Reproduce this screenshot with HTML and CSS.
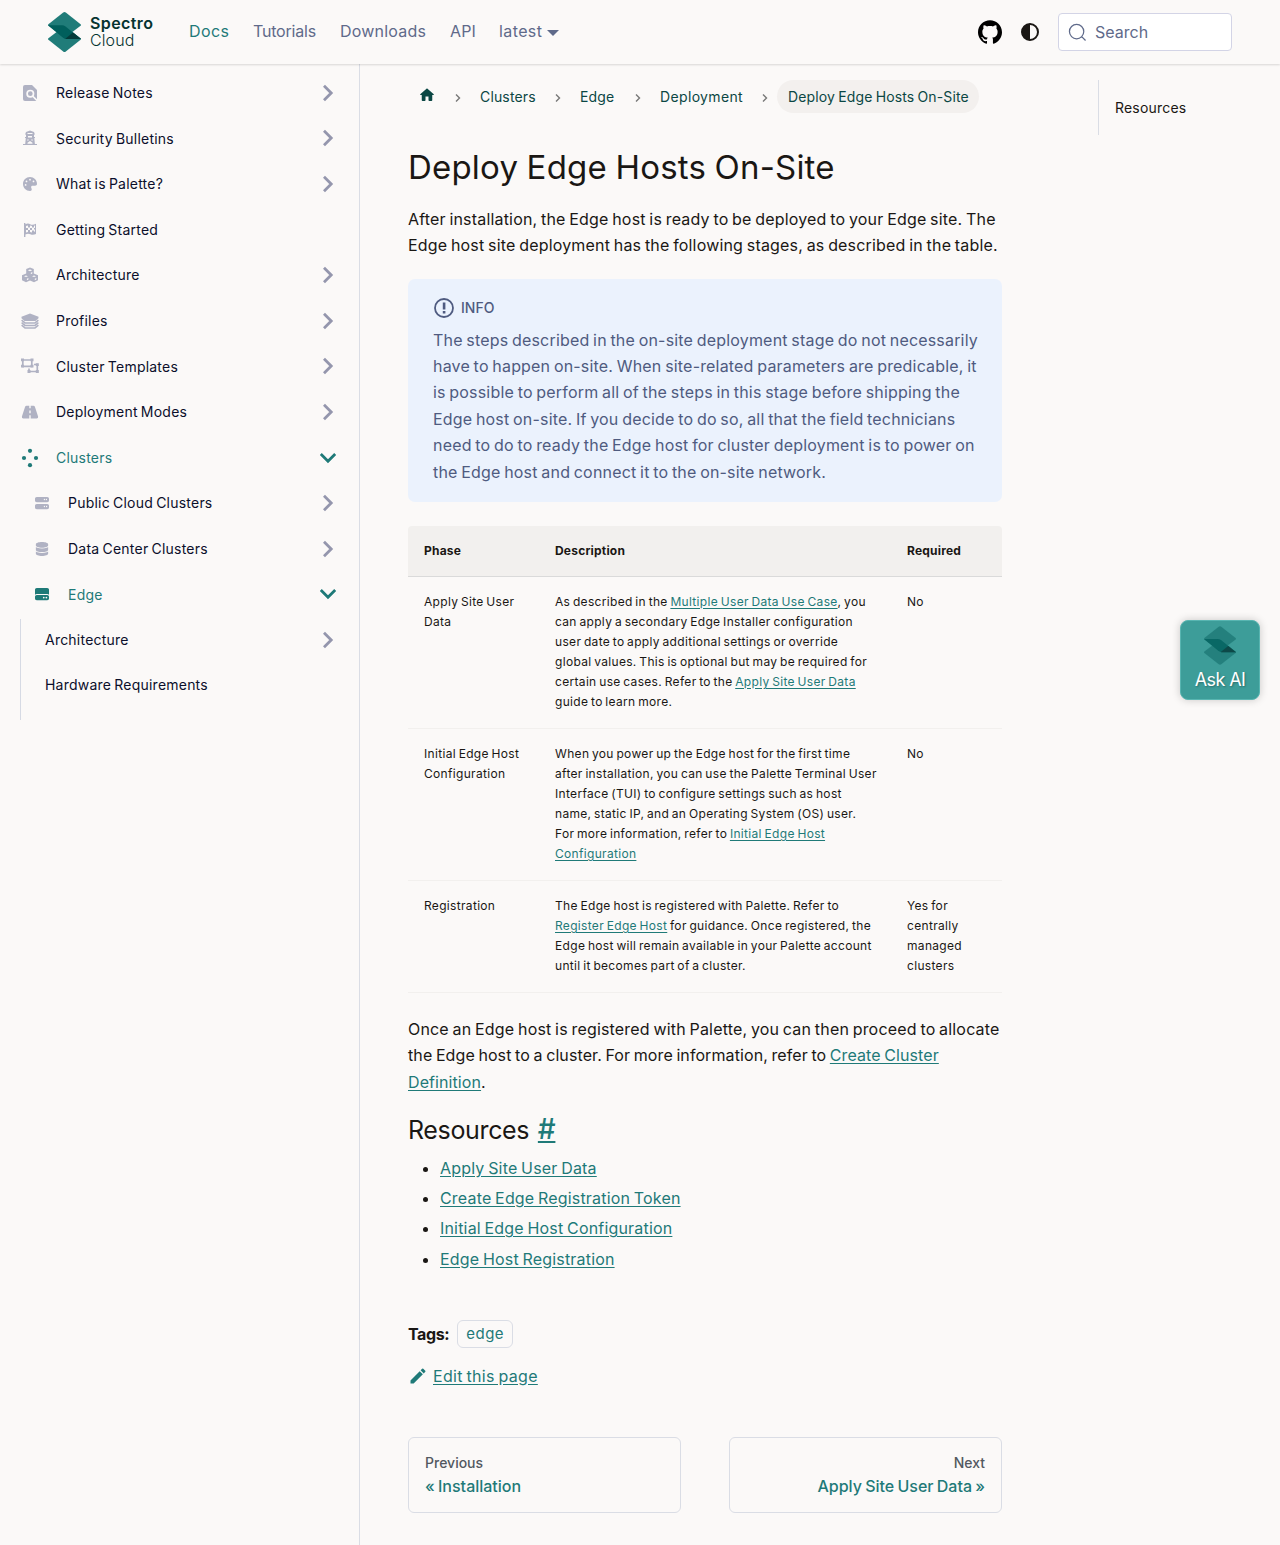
FILE: index.html
```html
<!DOCTYPE html>
<html lang="en">
<head>
<meta charset="utf-8">
<title>Deploy Edge Hosts On-Site</title>
<link rel="stylesheet" href="styles.css">
</head>
<body>
<svg class="sprite" aria-hidden="true">
  <symbol id="logo" viewBox="0 0 33 40">
    <path fill="#207c79" d="M15.2.6q1.3-1 2.6 0L32.6 12.2q.8.8 0 1.6L16.5 26 .4 13.8q-.8-.8 0-1.6z"/>
    <path fill="#207c79" d="M16.5 14l16.1 12.2q.8.8 0 1.6L17.8 39.4q-1.3 1-2.6 0L.4 27.8q-.8-.8 0-1.6z"/>
    <path fill="#005f5c" d="M0 13.2h14q2 0 3.5 1.2L33 27H18.500q-2 0-3.500-1.200z"/>
    <path fill="#053b3a" d="M25 20.500L33 27H18.500q-.8 0-1.200-.2z"/>
  </symbol>
  <symbol id="chev" viewBox="0 0 24 24"><path fill="none" stroke="currentColor" stroke-width="2.800" d="M8 4.800l7.200 7.200L8 19.200"/></symbol>
  <symbol id="sep" viewBox="0 0 14 14"><path fill="none" stroke="currentColor" stroke-width="1.400" d="M5 3.500L8.500 7 5 10.500"/></symbol>
</svg>
<header class="navbar">
  <a class="brand"><svg class="brand-mark"><use href="#logo"/></svg><span class="brand-name"><b>Spectro</b><span>Cloud</span></span></a>
  <nav class="nav-links">
    <a class="active docs">Docs</a><a class="tutorials">Tutorials</a><a class="downloads">Downloads</a><a class="api">API</a><a class="latest">latest<i class="caret"></i></a>
  </nav>
  <div class="nav-right">
    <svg class="github" viewBox="0 0 24 24"><path d="M12 .297c-6.63 0-12 5.373-12 12 0 5.303 3.438 9.8 8.205 11.385.6.113.82-.258.82-.577 0-.285-.01-1.04-.015-2.04-3.338.724-4.042-1.61-4.042-1.61C4.422 18.07 3.633 17.7 3.633 17.7c-1.087-.744.084-.729.084-.729 1.205.084 1.838 1.236 1.838 1.236 1.07 1.835 2.809 1.305 3.495.998.108-.776.417-1.305.76-1.605-2.665-.3-5.466-1.332-5.466-5.93 0-1.31.465-2.38 1.235-3.22-.135-.303-.54-1.523.105-3.176 0 0 1.005-.322 3.3 1.23.96-.267 1.98-.399 3-.405 1.02.006 2.04.138 3 .405 2.28-1.552 3.285-1.23 3.285-1.23.645 1.653.24 2.873.12 3.176.765.84 1.23 1.91 1.23 3.22 0 4.61-2.805 5.625-5.475 5.92.42.36.81 1.096.81 2.22 0 1.606-.015 2.896-.015 3.286 0 .315.21.69.825.57C20.565 22.092 24 17.592 24 12.297c0-6.627-5.373-12-12-12"/></svg>
    <svg class="theme" viewBox="0 0 18 18"><circle cx="9" cy="9" r="8" fill="none" stroke="#1a1714" stroke-width="2"/><path fill="#1a1714" d="M9 1a8 8 0 0 0 0 16z"/></svg>
    <div class="search"><svg viewBox="0 0 20 20"><path fill="none" stroke="currentColor" stroke-width="1.300" stroke-linecap="round" d="M14.386 14.386l4.088 4.088-4.088-4.088c-2.942 2.942-7.711 2.942-10.653 0-2.942-2.942-2.942-7.711 0-10.653 2.942-2.942 7.711-2.942 10.653 0 2.942 2.942 2.942 7.711 0 10.653z"/></svg><span>Search</span></div>
  </div>
</header>
<div class="layout">
  <aside class="sidebar">
    <ul class="menu">
      <li><svg class="ico" viewBox="0 0 20 20"><path fill-rule="evenodd" d="M5 2h7l5 5v11H5a2 2 0 0 1-2-2V4a2 2 0 0 1 2-2z"/><circle class="cut" cx="10.300" cy="10.700" r="3.200"/><path class="cut" d="M12.600 13l4.800 4.800"/></svg><span>Release Notes</span><svg class="chev"><use href="#chev"/></svg></li>
      <li><svg class="ico" viewBox="0 0 20 20"><path fill-rule="evenodd" d="M10 2.500l4 1.500.8 2.200-.8.8v2h1v1h-.7l.6 6H17v1H3v-1h2.200l.6-6H5V9h1V7l-.8-.8L6 4zM7.500 5v1h5V5zM8 8v1.500h4V8zM7.700 11l-.3 2L9 12zm4.600 0L11 12l1.600 1zM10 13l-2.500 1.700v1h5v-1z"/></svg><span>Security Bulletins</span><svg class="chev"><use href="#chev"/></svg></li>
      <li><svg class="ico fa" viewBox="0 0 512 512"><path d="M512 256c0 .9 0 1.800 0 2.700c-.4 36.500-33.600 61.300-70.100 61.300H344c-26.500 0-48 21.500-48 48c0 3.400 .4 6.700 1 9.900c2.100 10.200 6.500 20 10.800 29.900c6.100 13.800 12.100 27.500 12.100 42c0 31.800-21.600 60.700-53.400 62c-3.500 .1-7 .2-10.600 .2C114.600 512 0 397.400 0 256S114.600 0 256 0S512 114.600 512 256zM128 288a32 32 0 1 0 -64 0 32 32 0 1 0 64 0zm0-96a32 32 0 1 0 0-64 32 32 0 1 0 0 64zM288 96a32 32 0 1 0 -64 0 32 32 0 1 0 64 0zm96 96a32 32 0 1 0 0-64 32 32 0 1 0 0 64z"/></svg><span>What is Palette?</span><svg class="chev"><use href="#chev"/></svg></li>
      <li><svg class="ico" viewBox="0 0 20 20"><path fill-rule="evenodd" d="M4 3h1.400v1.200q2.600-1.200 4.800 0t5.800-.4V14q-3 1.400-5.600.2t-5 .3V17H4zm2 3v2h2v2H6v2.400l2-.4v-2h2v2l2 .5v-2h2v1.300l1-.3v-2h-1V8h1V5.500l-1 .3v1.700h-2V6l-2-.5v2H8v-2zm4 2h2v2h-2z"/></svg><span>Getting Started</span></li>
      <li><svg class="ico" viewBox="0 0 20 20"><path fill-rule="evenodd" d="M10 2.400l3.800 1.600v4.500l4.200 1.800v5L14 17.200l-4-1.700-4 1.700-4-1.900v-5l4.200-1.800V4zM7.800 5.300L10 6.200l2.200-.9L10 4.500zM4 11.200l2 .9 2-.9-2-.8zm8 0l2 .9 2-.9-2-.8zM10.800 7.700v1.600l1.500-.7V7zM6.900 13.700v1.600l1.500-.7V13zm7.900 0v1.600l1.500-.7V13z"/></svg><span>Architecture</span><svg class="chev"><use href="#chev"/></svg></li>
      <li><svg class="ico" viewBox="0 0 20 20"><path d="M10 2.500l8.500 3.300v1.400L15.500 10h-11l-3-2.800V5.800z"/><path fill="none" stroke="currentColor" stroke-width="1.500" d="M1.600 9.200L5 11.900h10l3.400-2.700M1.600 11.700L5 14.400h10l3.400-2.700M1.600 14.200L5 16.900h10l3.400-2.700"/></svg><span>Profiles</span><svg class="chev"><use href="#chev"/></svg></li>
      <li><svg class="ico" viewBox="0 0 20 20"><path fill="none" stroke="currentColor" stroke-width="1.700" d="M2.800 4h9v6.300h-9zM14 8.500h3.300v7H9V12.500"/><path d="M1 2.500h3v2.800H1zm9.500 0h3v2.800h-3zM1 8.800h3v2.800H1zm9.500 0h3v2.800h-3zm5.300-1.600h3V10h-3zm0 6.900h3v2.800h-3zM7.500 14.100h3v2.800h-3z"/></svg><span>Cluster Templates</span><svg class="chev"><use href="#chev"/></svg></li>
      <li><svg class="ico" viewBox="0 0 20 20"><path d="M6.500 3.800h2.800v2.500h1.400V3.800h2.800q1 0 1.400 1l3.200 9.700q.3 1.900-1.400 1.900h-6v-3.200H9.300v3.200h-6q-1.700 0-1.400-1.900L5.100 4.800q.4-1 1.400-1zm2.800 4.700v2.700h1.400V8.500z" fill-rule="evenodd"/></svg><span>Deployment Modes</span><svg class="chev"><use href="#chev"/></svg></li>
      <li class="open"><svg class="ico" viewBox="0 0 20 20"><circle cx="10" cy="2.800" r="2.100"/><circle cx="4" cy="10" r="2.100"/><circle cx="16" cy="10" r="2.100"/><circle cx="10" cy="17.200" r="2.100"/></svg><span>Clusters</span><svg class="chev"><use href="#chev"/></svg></li>
      <li class="sub"><svg class="ico fa" viewBox="0 0 512 512"><path d="M64 32C28.700 32 0 60.700 0 96v64c0 35.300 28.700 64 64 64H448c35.300 0 64-28.700 64-64V96c0-35.300-28.700-64-64-64H64zm280 72a24 24 0 1 1 0 48 24 24 0 1 1 0-48zm48 24a24 24 0 1 1 48 0 24 24 0 1 1 -48 0zM64 288c-35.300 0-64 28.700-64 64v64c0 35.300 28.700 64 64 64H448c35.300 0 64-28.700 64-64V352c0-35.300-28.700-64-64-64H64zm280 72a24 24 0 1 1 0 48 24 24 0 1 1 0-48zm56 24a24 24 0 1 1 48 0 24 24 0 1 1 -48 0z"/></svg><span>Public Cloud Clusters</span><svg class="chev"><use href="#chev"/></svg></li>
      <li class="sub"><svg class="ico fa" viewBox="-32 0 512 512"><path d="M448 80v48c0 44.200-100.300 80-224 80S0 172.200 0 128V80C0 35.800 100.300 0 224 0S448 35.800 448 80zM393.200 214.700c20.800-7.400 39.900-16.900 54.800-28.600V288c0 44.200-100.300 80-224 80S0 332.200 0 288V186.100c14.900 11.800 34 21.200 54.800 28.600C99.700 230.700 159.500 240 224 240s124.300-9.300 169.200-25.300zM0 346.100c14.900 11.800 34 21.200 54.800 28.600C99.700 390.700 159.500 400 224 400s124.300-9.300 169.200-25.300c20.800-7.400 39.900-16.900 54.800-28.600V432c0 44.200-100.300 80-224 80S0 476.200 0 432V346.100z"/></svg><span>Data Center Clusters</span><svg class="chev"><use href="#chev"/></svg></li>
      <li class="sub open"><svg class="ico fa" viewBox="0 0 512 512"><path d="M0 96C0 60.700 28.700 32 64 32H448c35.300 0 64 28.700 64 64V280.400c-17-15.200-39.400-24.400-64-24.400H64c-24.600 0-47 9.200-64 24.400V96zM64 288H448c35.300 0 64 28.700 64 64v64c0 35.300-28.700 64-64 64H64c-35.300 0-64-28.700-64-64V352c0-35.300 28.700-64 64-64zM320 416a32 32 0 1 0 0-64 32 32 0 1 0 0 64zm128-32a32 32 0 1 0 -64 0 32 32 0 1 0 64 0z"/></svg><span>Edge</span><svg class="chev"><use href="#chev"/></svg></li>
    </ul>
    <ul class="menu nested">
      <li><span>Architecture</span><svg class="chev"><use href="#chev"/></svg></li>
      <li><span>Hardware Requirements</span></li>
    </ul>
  </aside>
  <main>
    <nav class="crumbs">
      <a class="home"><svg viewBox="0 0 24 24"><path d="M10 19v-5h4v5c0 .55.45 1 1 1h3c.55 0 1-.45 1-1v-7h1.700c.46 0 .68-.57.33-.87L12.670 3.600c-.38-.34-.96-.34-1.340 0l-8.360 7.530c-.34.3-.13.87.33.87H5v7c0 .55.45 1 1 1h3c.55 0 1-.45 1-1z"/></svg></a>
      <svg class="sep"><use href="#sep"/></svg><a class="c1">Clusters</a>
      <svg class="sep"><use href="#sep"/></svg><a class="c2">Edge</a>
      <svg class="sep"><use href="#sep"/></svg><a class="c3">Deployment</a>
      <svg class="sep"><use href="#sep"/></svg><a class="current">Deploy Edge Hosts On-Site</a>
    </nav>
    <h1>Deploy Edge Hosts On-Site</h1>
    <p class="intro">After installation, the Edge host is ready to be deployed to your Edge site. The<br>Edge host site deployment has the following stages, as described in the table.</p>
    <section class="info">
      <h5><svg viewBox="0 0 22 22"><circle cx="11" cy="11" r="9" fill="none" stroke="currentColor" stroke-width="1.800"/><path fill="currentColor" d="M9.800 5.500h2.600v7H9.800zM9.800 14h2.600v2.500H9.800z"/></svg>INFO</h5>
      <p>The steps described in the on-site deployment stage do not necessarily<br>have to happen on-site. When site-related parameters are predicable, it<br>is possible to perform all of the steps in this stage before shipping the<br>Edge host on-site. If you decide to do so, all that the field technicians<br>need to do to ready the Edge host for cluster deployment is to power on<br>the Edge host and connect it to the on-site network.</p>
    </section>
    <table>
      <thead><tr><th class="phase">Phase</th><th class="desc">Description</th><th>Required</th></tr></thead>
      <tbody>
        <tr><td>Apply Site User<br>Data</td><td>As described in the <a>Multiple User Data Use Case</a>, you<br>can apply a secondary Edge Installer configuration<br>user date to apply additional settings or override<br>global values. This is optional but may be required for<br>certain use cases. Refer to the <a>Apply Site User Data</a><br>guide to learn more.</td><td>No</td></tr>
        <tr><td>Initial Edge Host<br>Configuration</td><td>When you power up the Edge host for the first time<br>after installation, you can use the Palette Terminal User<br>Interface (TUI) to configure settings such as host<br>name, static IP, and an Operating System (OS) user.<br>For more information, refer to <a>Initial Edge Host<br>Configuration</a></td><td>No</td></tr>
        <tr><td>Registration</td><td>The Edge host is registered with Palette. Refer to<br><a>Register Edge Host</a> for guidance. Once registered, the<br>Edge host will remain available in your Palette account<br>until it becomes part of a cluster.</td><td>Yes for<br>centrally<br>managed<br>clusters</td></tr>
      </tbody>
    </table>
    <p class="after">Once an Edge host is registered with Palette, you can then proceed to allocate<br><span class="tight">the Edge host to a cluster. For more information, refer to <a>Create Cluster<br>Definition</a>.</span></p>
    <h2>Resources <a>#</a></h2>
    <ul class="links"><li><a>Apply Site User Data</a></li><li><a>Create Edge Registration Token</a></li><li><a>Initial Edge Host Configuration</a></li><li><a>Edge Host Registration</a></li></ul>
    <div class="tags"><b>Tags:</b><span class="tag">edge</span></div>
    <div class="edit"><svg viewBox="0 0 40 40"><path d="m34.500 11.700l-3 3.100-6.300-6.300 3.100-3q0.500-0.500 1.200-0.500t1.100 0.500l3.900 3.900q0.500 0.400 0.500 1.100t-0.500 1.200z m-29.500 17.100l18.400-18.500 6.300 6.300-18.400 18.400h-6.300v-6.200z"/></svg><a>Edit this page</a></div>
    <nav class="pager">
      <a><small>Previous</small><span>« Installation</span></a>
      <a class="next"><small>Next</small><span>Apply Site User Data »</span></a>
    </nav>
  </main>
  <div class="toc"><a>Resources</a></div>
</div>
<button class="ask"><svg><use href="#logo"/></svg><span>Ask AI</span></button>
</body>
</html>
```
FILE: styles.css
```css
* { box-sizing: border-box; }
body {
  margin: 0;
  height: 1545px;
  overflow: hidden;
  background: #fbf9f8;
  color: #1a1714;
  font: 400 16px/26.4px Inter, "Liberation Sans", sans-serif;
  letter-spacing: 0.18px;
  word-spacing: -1px;
  white-space: nowrap;
}
ul { list-style: none; margin: 0; padding: 0; }
h1, h2, h5, p { margin: 0; }
svg { display: block; flex: none; fill: currentColor; }
.sprite { width: 0; height: 0; position: absolute; }

.navbar {
  position: relative;
  display: flex;
  align-items: center;
  height: 64px;
  padding: 0 48px;
  box-shadow: 0 1px 2px rgba(0, 0, 0, .14);
}
.brand { display: flex; gap: 9px; width: 141px; }
.brand-mark { width: 33px; height: 40px; }
.brand-name { display: flex; flex-direction: column; padding-top: 3px; font-size: 16px; line-height: 17px; color: #063330; }
.brand-name b { font-weight: 600; letter-spacing: 0.4px; }
.brand-name span { letter-spacing: 0.1px; font-weight: 300; }
.nav-links { display: flex; color: #5f6a8a; padding-bottom: 2px; letter-spacing: 0.1px; }
.docs { width: 64px; letter-spacing: 0.4px; }
.tutorials { width: 87px; letter-spacing: -0.2px; }
.downloads { width: 110px; letter-spacing: 0.2px; }
.api { width: 49px; }
.latest { display: flex; align-items: center; gap: 5px; letter-spacing: 0.4px; }
.active { color: #1f7a78; }
.caret { border: 6.5px solid transparent; border-top-color: currentColor; border-bottom: 0; margin-top: 3px; }
.nav-right { display: flex; align-items: center; margin-left: auto; }
.github { width: 24px; height: 24px; fill: #000; }
.theme { width: 18px; height: 18px; margin: 0 19px; }
.search {
  display: flex; align-items: center; gap: 8px;
  width: 174px; height: 38px; padding-left: 9px;
  border: 1px solid #d3d4e6; border-radius: 4px;
  background: #fff; color: #5f6a8a; letter-spacing: 0;
}
.search svg { width: 19px; height: 19px; }

.layout { display: flex; height: 1481px; }
.sidebar { width: 360px; padding: 6px 20px 0; border-right: 1px solid #dadde5; }
.menu { font-size: 14px; font-weight: 430; letter-spacing: 0.22px; color: #0b0f2b; }
.menu li { display: flex; align-items: center; height: 45.6px; }
.menu span { padding-top: 1px; }
.ico { width: 20px; height: 20px; margin-right: 16px; color: #b0b2c3; }
.ico.fa { padding: 3px; }
.cut { fill: none; stroke: #fbf9f8; stroke-width: 1.7; }
.chev { width: 24px; height: 24px; margin-left: auto; margin-right: -1px; color: #9496ad; }
.sub { padding-left: 12px; }
.open, .open .ico, .open .chev { color: #1f7a78; }
.open .chev { transform: rotate(90deg); }
.nested { height: 101px; padding-left: 24px; border-left: 1px solid #d6dae4; margin-top: 1.8px; }
.nested li:first-child { height: 43px; }
.nested li:last-child { height: 47px; }
.nested span { padding-top: 0; }

main { width: 594px; margin-left: 48px; padding-top: 16px; display: flex; flex-direction: column; }
main a { color: #1f7a78; text-decoration: underline; text-underline-offset: 2px; }
.crumbs { display: flex; align-items: center; height: 33px; font-size: 14px; letter-spacing: 0.15px; }
.crumbs a { padding-top: 1px; }
main .crumbs a { color: #0b4744; text-decoration: none; }
.crumbs .home { width: 42px; padding: 0 0 4px 10px; }
.home svg { width: 18px; height: 18px; }
.sep { width: 14px; height: 14px; margin: 2px 15px 0 1px; color: #777; }
.c1 { width: 70px; } .c2 { width: 50px; } .c3 { width: 97px; letter-spacing: 0.35px; }
.crumbs .current { margin-left: -10px; padding: 4px 10px 2.600px 11px; border-radius: 17px; background: #f3f0ee; letter-spacing: 0.15px; }
h1 { margin-top: 33px; font-size: 33px; line-height: 42px; font-weight: 430; letter-spacing: 0.2px; }
.intro { margin-top: 18px; }
.info { margin-top: 20px; height: 223px; padding: 16px 25px; border-radius: 7px; background: #ebf2fd; color: #4f5b80; }
.info h5 { display: flex; align-items: center; gap: 6px; height: 26px; margin-bottom: 5.8px; font-size: 14px; font-weight: 500; letter-spacing: 0; }
.info svg { width: 22px; height: 22px; }
table { margin-top: 24px; width: 594px; table-layout: fixed; border-spacing: 0; font-size: 12px; line-height: 20px; letter-spacing: 0.32px; }
th { height: 51px; padding: 0 16px; text-align: left; background: #f2f0ee; border-bottom: 1px solid #dadada; font-weight: 700; letter-spacing: 0.2px; }
th:first-child { border-top-left-radius: 4px; }
th:last-child { border-top-right-radius: 4px; }
.phase { width: 131px; }
.desc { width: 352px; }
td { padding: 15px 16px 16px; vertical-align: top; border-bottom: 1px solid #f2f0ee; }
.after { margin-top: 23px; }
.tight { letter-spacing: 0.09px; }
h2 { height: 34px; margin-top: 18.6px; font-size: 25px; line-height: 33px; font-weight: 430; letter-spacing: -0.35px; }
h2 a { margin-left: 3px; font-size: 28px; line-height: 28px; font-weight: 500; }
.links { margin-top: 7px; padding-left: 32px; list-style: disc; letter-spacing: 0.18px; }
.links li { margin-bottom: 4px; }
.tags { display: flex; align-items: center; gap: 8px; height: 28px; margin-top: 43.5px; }
.tags b { letter-spacing: -0.4px; padding-top: 1px; }
.tag { height: 28px; padding: 0 8px; border: 1px solid #dadde5; border-radius: 6px; font-size: 15px; line-height: 26px; letter-spacing: 0.5px; color: #1f7a78; }
.edit { display: flex; align-items: center; gap: 5px; margin-top: 15px; color: #1f7a78; letter-spacing: 0.3px; }
.edit svg { width: 20px; height: 20px; }
.pager { display: flex; gap: 48px; margin-top: 48px; }
.pager a { display: flex; flex-direction: column; width: 273px; height: 76px; padding: 14px 16px; border: 1px solid #dadde5; border-radius: 6px; font-weight: 450; line-height: 24px; letter-spacing: 0; text-decoration: none; }
.pager small { font-size: 14px; line-height: 22px; color: #525860; }
.pager .next { text-align: right; }
.toc { width: 134px; height: 55px; margin: 16px 0 0 96px; padding: 15px 16px; border-left: 1px solid #dadde5; font-size: 14px; letter-spacing: 0.2px; }

.ask {
  position: absolute; left: 1180px; top: 620px;
  display: flex; flex-direction: column; align-items: center;
  width: 80px; height: 80px; padding: 5px 0 0;
  border: 1px solid #58b5b1; border-radius: 8px;
  background: #3d9d99; color: #fff;
  font: 400 18px/24px Inter, sans-serif;
  letter-spacing: -0.6px;
  box-shadow: 0 0 8px rgba(0, 0, 0, .2);
  text-shadow: 1px 1px 2px rgba(0, 0, 0, .3);
}
.ask svg { width: 32px; height: 39px; opacity: .85; }
.ask span { margin-top: 3px; }
```
